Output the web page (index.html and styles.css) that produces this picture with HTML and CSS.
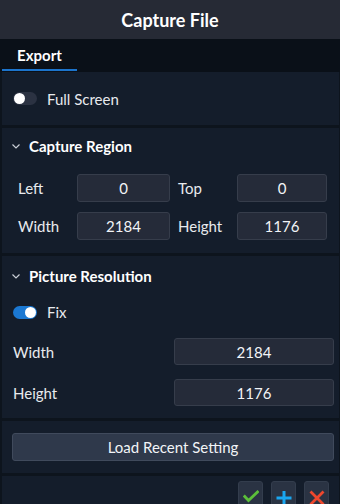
FILE: index.html
```html
<!DOCTYPE html>
<html>
<head>
<meta charset="utf-8">
<link rel="stylesheet" href="styles.css">
</head>
<body>
<div class="app">
  <div class="header">Capture File</div>
  <div class="tabbar"><div class="tab">Export</div></div>
  <div class="sections">
    <div class="section s-full">
      <div class="toggle"><span class="knob"></span></div>
      <span class="toggle-label">Full Screen</span>
    </div>
    <div class="section s-region">
      <div class="sec-head">
        <svg class="chev" width="8" height="5" viewBox="0 0 8 5"><polyline points="0.5,0.5 4,4 7.5,0.5" fill="none" stroke="#c9ced6" stroke-width="1.2"/></svg>
        <span>Capture Region</span>
      </div>
      <div class="grid">
        <span class="lbl">Left</span><div class="field">0</div>
        <span class="lbl r">Top</span><div class="field">0</div>
        <span class="lbl">Width</span><div class="field">2184</div>
        <span class="lbl r">Height</span><div class="field">1176</div>
      </div>
    </div>
    <div class="section s-res">
      <div class="sec-head">
        <svg class="chev" width="8" height="5" viewBox="0 0 8 5"><polyline points="0.5,0.5 4,4 7.5,0.5" fill="none" stroke="#c9ced6" stroke-width="1.2"/></svg>
        <span>Picture Resolution</span>
      </div>
      <div class="fix-row">
        <div class="toggle on"><span class="knob"></span></div>
        <span class="toggle-label">Fix</span>
      </div>
      <div class="res-row first"><span class="lbl">Width</span><div class="field wide">2184</div></div>
      <div class="res-row"><span class="lbl">Height</span><div class="field wide">1176</div></div>
    </div>
    <div class="section s-load">
      <button class="load-btn">Load Recent Setting</button>
    </div>
    <div class="section s-actions">
      <button class="act">
        <svg width="16" height="16" viewBox="0 0 16 16"><polyline points="0.8,5.5 5.5,10.5 15.5,1" fill="none" stroke="#5cc03a" stroke-width="2.8"/></svg>
      </button>
      <button class="act">
        <svg width="16" height="16" viewBox="0 0 16 16"><path d="M8 1V16M0.5 8H15.5" fill="none" stroke="#19a6f0" stroke-width="3"/></svg>
      </button>
      <button class="act">
        <svg width="16" height="16" viewBox="0 0 16 16"><path d="M1.5 1.5L14.5 14.5M14.5 1.5L1.5 14.5" fill="none" stroke="#ee472d" stroke-width="2.8"/></svg>
      </button>
    </div>
  </div>
</div>
</body>
</html>
```

FILE: styles.css
```css
* { box-sizing: border-box; }
html, body {
  margin: 0;
  padding: 0;
  width: 340px;
  height: 504px;
  overflow: hidden;
  background: #0d141d;
  font-family: Lato, "Noto Sans", sans-serif;
  color: #e8eaee;
}
.app { width: 340px; }
.header {
  height: 39px;
  background: #262a35;
  display: flex;
  align-items: center;
  justify-content: center;
  font-weight: 700;
  font-size: 18px;
  color: #ffffff;
}
.tabbar {
  height: 33px;
  background: #0a1018;
  padding-left: 2px;
}
.tab {
  width: 75px;
  height: 32px;
  border-bottom: 2px solid #1c74cc;
  display: flex;
  align-items: center;
  justify-content: center;
  font-weight: 700;
  font-size: 15px;
  color: #ffffff;
  padding-top: 1px;
}
.sections {
  display: flex;
  flex-direction: column;
  gap: 3px;
  padding: 0 1px 0 2px;
}
.section { background: #141d2b; }
.s-full {
  height: 53px;
  display: flex;
  align-items: center;
  padding-left: 11px;
}
.toggle {
  width: 24px;
  height: 13px;
  border-radius: 7px;
  background: #2b3242;
  position: relative;
  flex: none;
}
.toggle .knob {
  position: absolute;
  top: 1px;
  left: 1px;
  width: 11px;
  height: 11px;
  border-radius: 50%;
  background: #ffffff;
}
.toggle.on { background: #1b78d2; }
.toggle.on .knob { left: 12px; }
.toggle-label {
  font-size: 15px;
  margin-left: 10px;
}
.sec-head {
  height: 36px;
  display: flex;
  align-items: center;
  padding-left: 10px;
  font-weight: 700;
  font-size: 15px;
  color: #ffffff;
}
.chev { margin-right: 9px; margin-top: 1px; }
.s-region { height: 125px; }
.grid {
  margin-top: 10px;
  padding-left: 16px;
  display: grid;
  grid-template-columns: 59px 93px 67px 90px;
  grid-auto-rows: 28px;
  row-gap: 10px;
  align-items: center;
}
.lbl { font-size: 15px; }
.lbl.r { padding-left: 8px; }
.field {
  height: 28px;
  background: #252b39;
  border: 1px solid #363d4b;
  border-radius: 3px;
  display: flex;
  align-items: center;
  justify-content: center;
  font-size: 15px;
  color: #f2f4f7;
}
.s-res {
  height: 162px;
  padding-right: 5px;
}
.s-res .sec-head { height: 38px; padding-top: 2px; }
.fix-row {
  height: 36px;
  display: flex;
  align-items: center;
  padding-left: 11px;
}
.res-row {
  display: flex;
  align-items: center;
  justify-content: space-between;
  padding-left: 11px;
  margin-top: 14px;
}
.res-row.first { margin-top: 8px; }
.field.wide { width: 160px; height: 27px; }
.s-load {
  height: 52px;
  padding: 12px 5px 12px 10px;
}
.load-btn {
  width: 100%;
  height: 28px;
  background: #2f394b;
  border: 1px solid #404a5c;
  border-radius: 3px;
  font-family: Lato, "Noto Sans", sans-serif;
  font-size: 15px;
  color: #f2f4f7;
  padding: 0;
}
.s-actions {
  height: 40px;
  display: flex;
  justify-content: flex-end;
  gap: 8px;
  padding: 5px 10px 0 0;
}
.act {
  width: 25px;
  height: 34px;
  background: #2a3343;
  border: 1px solid #333d4d;
  border-radius: 3px;
  padding: 8px 0 0 4px;
  display: flex;
  align-items: flex-start;
  justify-content: flex-start;
}
.act svg { display: block; flex: none; }
```
